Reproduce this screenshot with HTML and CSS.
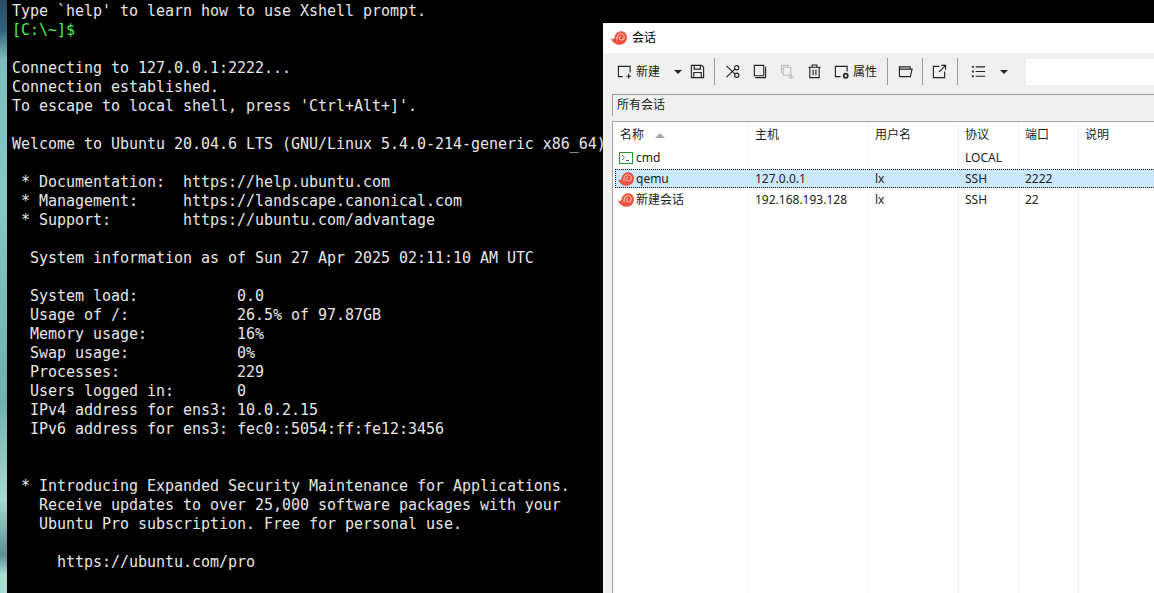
FILE: index.html
```html
<!DOCTYPE html>
<html lang="zh">
<head>
<meta charset="utf-8">
<title>会话</title>
<link rel="stylesheet" href="styles.css">
</head>
<body>
<svg class="sprite" width="0" height="0" aria-hidden="true">
  <symbol id="snail" viewBox="0 0 16 14">
    <path d="M0 7.2C1.8 8.6 3 8 3.5 6.4C4.1 2.6 6.8 0.2 10 0.2C13.4 0.2 16 2.8 16 6.2C16 10.6 12.8 13.8 8.6 13.8C4.6 13.8 1.4 11.4 0 7.2Z" fill="#ee5240"/>
    <path d="M6.2 9.2C4.9 5.8 7.2 2.7 10 2.8C12.5 2.9 14 5.2 13 7.4C12.1 9.3 9.4 9.5 8.5 7.8C7.9 6.6 8.8 5.3 10.1 5.5" fill="none" stroke="#fbbcae" stroke-width="1.1"/>
  </symbol>
</svg>
<div class="desktop">
  <div class="wallpaper"></div>
  <pre class="terminal">Type `help' to learn how to use Xshell prompt.
<span class="prompt">[C:\~]$</span>

Connecting to 127.0.0.1:2222...
Connection established.
To escape to local shell, press 'Ctrl+Alt+]'.

Welcome to Ubuntu 20.04.6 LTS (GNU/Linux 5.4.0-214-generic x86_64)

 * Documentation:  https://help.ubuntu.com
 * Management:     https://landscape.canonical.com
 * Support:        https://ubuntu.com/advantage

  System information as of Sun 27 Apr 2025 02:11:10 AM UTC

  System load:           0.0
  Usage of /:            26.5% of 97.87GB
  Memory usage:          16%
  Swap usage:            0%
  Processes:             229
  Users logged in:       0
  IPv4 address for ens3: 10.0.2.15
  IPv6 address for ens3: fec0::5054:ff:fe12:3456


 * Introducing Expanded Security Maintenance for Applications.
   Receive updates to over 25,000 software packages with your
   Ubuntu Pro subscription. Free for personal use.

     https://ubuntu.com/pro</pre>

  <section class="window">
    <header class="titlebar">
      <svg class="snail title-snail"><use href="#snail"/></svg>
      <span>会话</span>
    </header>

    <div class="toolbar">
      <button class="tool tool-new">
        <svg class="ico" viewBox="0 0 16 16"><path d="M6 13.5H1.5V2.5H14V9M10 13H15M12.5 10.5V15.5"/></svg>
        <span>新建</span>
      </button>
      <span class="caret caret-new"></span>
      <button class="tool">
        <svg class="ico" viewBox="0 0 16 16"><path d="M1.5 1.5H12.5L14.5 3.5V14.5H1.5ZM4.5 1.5V5.5H11V1.5M4 14.5V9H12V14.5"/></svg>
      </button>
      <i class="sep sep-a"></i>
      <button class="tool tool-cut">
        <svg class="ico" viewBox="0 0 16 16"><circle cx="12.5" cy="4" r="2.3"/><circle cx="12.5" cy="12" r="2.3"/><path d="M1.5 2L10.5 10.5M1.5 14L10.5 5.5"/></svg>
      </button>
      <button class="tool tool-copy">
        <svg class="ico" viewBox="0 0 16 16"><path d="M2.5 1.5H12.5V12.5H2.5ZM14.5 3V14.5H3.5"/></svg>
      </button>
      <button class="tool tool-paste">
        <svg class="ico ico-off" viewBox="0 0 16 16"><path d="M3.5 3.5H11.5V12H3.5ZM1.5 10V1.5H9.5M9 14H15M12 11V16"/></svg>
      </button>
      <button class="tool tool-del">
        <svg class="ico" viewBox="0 0 16 16"><path d="M1.5 3.5H14.5M5.5 3V1H10.5V3M3 3.5V14.5H13V3.5M6.5 6V12M9.5 6V12"/></svg>
      </button>
      <button class="tool tool-prop">
        <svg class="ico" viewBox="0 0 16 16"><path d="M7 13.5H1.5V2.5H14V8"/><circle cx="12.5" cy="12.5" r="2.2" stroke-width="1.8"/></svg>
        <span>属性</span>
      </button>
      <i class="sep sep-b"></i>
      <button class="tool tool-open">
        <svg class="ico" viewBox="0 0 16 16"><path d="M1.5 13.5V3H13V5.5M1.5 5.5H15L13.2 13.5H1.5"/></svg>
      </button>
      <i class="sep sep-c"></i>
      <button class="tool tool-export">
        <svg class="ico" viewBox="0 0 16 16"><path d="M8 2.5H1.5V14.5H13.5V8M7.5 8.5L14 2M10 1.5H14.5V6"/></svg>
      </button>
      <i class="sep sep-d"></i>
      <button class="tool tool-list">
        <svg class="ico" viewBox="0 0 16 16"><path d="M5 3H15M5 8H15M5 13H15"/><path class="dots" d="M1 2H3V4H1ZM1 7H3V9H1ZM1 12H3V14H1Z"/></svg>
      </button>
      <span class="caret caret-list"></span>
      <div class="search"></div>
    </div>

    <div class="crumb">所有会话</div>

    <div class="list">
      <div class="guides"><i></i><i></i><i></i><i></i><i></i></div>
      <div class="row head">
        <span class="name-head">名称<b class="sort"></b></span><span>主机</span><span>用户名</span><span>协议</span><span>端口</span><span>说明</span>
      </div>
      <div class="row">
        <span class="name">
          <svg class="cmd" viewBox="0 0 14 12"><rect x="0.5" y="0.5" width="13" height="11" fill="#fff" stroke="#1f9a3a"/><path d="M3 3L5.5 5.5L3 8" fill="none" stroke="#1f7a8c"/><path d="M7 8.5H10" stroke="#555"/></svg>
          cmd
        </span><span></span><span></span><span>LOCAL</span><span></span><span></span>
      </div>
      <div class="row selected">
        <span class="name"><svg class="snail"><use href="#snail"/></svg>qemu</span><span>127.0.0.1</span><span>lx</span><span>SSH</span><span>2222</span><span></span>
      </div>
      <div class="row">
        <span class="name"><svg class="snail"><use href="#snail"/></svg>新建会话</span><span>192.168.193.128</span><span>lx</span><span>SSH</span><span>22</span><span></span>
      </div>
    </div>
  </section>
</div>
</body>
</html>
```
FILE: styles.css
```css
* { box-sizing: border-box; }
html, body { margin: 0; height: 100%; overflow: hidden; }
body { background: #000; }
.sprite { position: absolute; }

.desktop {
  position: relative;
  display: flex;
  width: 1154px;
  height: 593px;
  overflow: hidden;
}
.wallpaper {
  flex: 0 0 7px;
  background: linear-gradient(180deg, #2c4a63 0, #33607a 30px, #7fbcc0 60px, #86c6c4 200px, #6fb0b0 400px, #a9d8cf 500px, #5e8f98 555px, #abdcd2 575px, #a9dcd2 593px);
}
.terminal {
  flex: 1;
  margin: 0;
  padding: 2px 0 0 5px;
  background: #000;
  color: #e6e6e6;
  font: 15px/19px "DejaVu Sans Mono", monospace;
  letter-spacing: -0.033px;
}
.prompt { color: #4cf04c; }

.window {
  position: absolute;
  left: 603px;
  top: 23px;
  width: 551px;
  height: 570px;
  display: flex;
  flex-direction: column;
  background: #f0f0f0;
  color: #1a1a1a;
  font: 12px/16px "Noto Sans", "Noto Sans CJK SC", sans-serif;
}
.titlebar {
  flex: 0 0 30px;
  display: flex;
  align-items: center;
  gap: 5px;
  padding-left: 8px;
  background: #fff;
  color: #000;
}
.snail { width: 16px; height: 14px; flex: none; }
.title-snail { margin-top: -1px; }

.toolbar {
  flex: 0 0 41px;
  display: flex;
  align-items: center;
  padding: 0 0 4px 14px;
  background: #f0f0f0;
}
.tool {
  display: flex;
  align-items: center;
  gap: 4px;
  height: 24px;
  padding: 0;
  border: 0;
  background: none;
  color: #1a1a1a;
  font: inherit;
}
.ico {
  width: 15px;
  height: 15px;
  fill: none;
  stroke: #222;
  stroke-width: 1.2;
  flex: none;
}
.ico-off { stroke: #bdbdbd; }
.dots { fill: #222; stroke: none; }
.tool-new { width: 57px; }
.caret {
  width: 0;
  height: 0;
  border-left: 4px solid transparent;
  border-right: 4px solid transparent;
  border-top: 4px solid #222;
  flex: none;
}
.caret-new { margin-right: 8px; }
.sep {
  flex: none;
  width: 1px;
  height: 27px;
  background: #9a9a9a;
}
.sep-a { margin: 0 10px 0 9px; }
.tool-cut { margin-right: 12px; }
.tool-copy { margin-right: 13px; }
.tool-paste { margin-right: 12px; }
.tool-del { margin-right: 12px; }
.tool-prop { gap: 4px; }
.sep-b { margin: 0 10px 0 10px; }
.sep-c { margin: 0 9px 0 9px; }
.sep-d { margin: 0 13px 0 10px; }
.tool-list { margin-right: 14px; }
.search {
  flex: 1;
  height: 26px;
  margin-left: 18px;
  background: #fff;
}

.crumb {
  flex: 0 0 22px;
  margin-left: 9px;
  padding: 2px 0 0 4px;
  border-top: 1px solid #a0a0a0;
  border-left: 1px solid #a0a0a0;
  background: #f0f0f0;
  color: #222;
}

.list {
  flex: 1;
  position: relative;
  margin: 5px 0 0 9px;
  padding-top: 1px;
  background: #fff;
  border-top: 1px solid #a0a0a8;
  border-left: 1px solid #a0a0a8;
  overflow: hidden;
}
.guides {
  position: absolute;
  inset: 0;
  display: grid;
  grid-template-columns: 136px 120px 90px 60px 60px;
}
.guides i { border-right: 1px solid #eef0f2; }
.row {
  position: relative;
  display: grid;
  grid-template-columns: 136px 120px 90px 60px 60px 1fr;
  height: 21px;
  align-items: center;
  color: #222;
}
.row > span { padding-left: 6px; white-space: nowrap; }
.row > .name { display: flex; align-items: center; gap: 2px; padding-left: 5px; }
.head { height: 24px; }
.head > .name-head { display: flex; align-items: center; padding-left: 7px; }
.sort {
  width: 0;
  height: 0;
  margin-left: 11px;
  border-left: 5px solid transparent;
  border-right: 5px solid transparent;
  border-bottom: 5px solid #a8a8a8;
}
.cmd { width: 14px; height: 12px; margin: 0 1px 0 1px; flex: none; }
.selected {
  grid-template-columns: 134px 120px 90px 60px 60px 1fr;
  height: 19px;
  margin: 1px -10px 1px 2px;
  background: #cce8ff;
  outline: 1px dotted #111;
  outline-offset: -1px;
}
.selected > .name { padding-left: 3px; }
```
